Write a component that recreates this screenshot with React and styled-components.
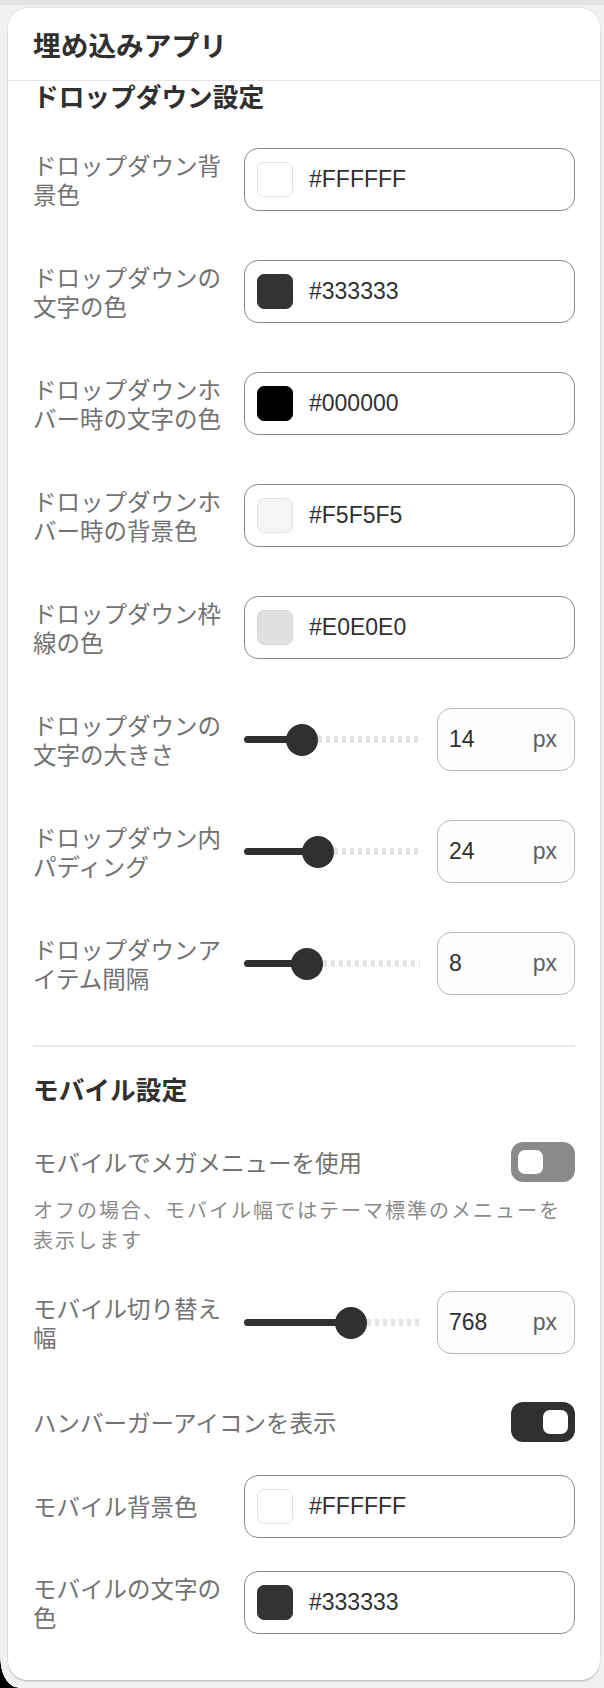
import React from "react";
import styled, { createGlobalStyle } from "styled-components";

const GlobalStyle = createGlobalStyle`
  html, body { margin: 0; padding: 0; }
  body {
    background: linear-gradient(#e4e4e4 0 5px, #f1f1f1 5px);
    font-family: "Liberation Sans", "Noto Sans CJK JP", sans-serif;
    color: #303030;
  }
  * { box-sizing: border-box; }
`;

const Page = styled.div`
  padding: 8px 4px 8px 8px;
`;

const Card = styled.section`
  background: #ffffff;
  border-radius: 20px;
  box-shadow: 0 0 0 1px rgba(0, 0, 0, 0.05), 0 2px 1px rgba(0, 0, 0, 0.12);
  overflow: hidden;
`;

const CardHeader = styled.header`
  height: 73px;
  display: flex;
  align-items: center;
  padding: 0 25px;
  border-bottom: 1px solid #e6e6e6;
`;

const Title = styled.h1`
  margin: 0;
  font-family: "Noto Sans CJK JP", sans-serif;
  font-size: 27.7px;
  font-weight: 700;
  line-height: 34px;
  color: #303030;
`;

const Body = styled.div`
  padding: 0 25px 46px;
  display: flex;
  flex-direction: column;
`;

const SectionTitle = styled.h2`
  margin: ${(p) => p.$mt || 0}px 0 0;
  font-family: "Noto Sans CJK JP", sans-serif;
  font-size: 25.7px;
  font-weight: 700;
  line-height: 30px;
  color: #303030;
`;

const FieldList = styled.div`
  margin-top: ${(p) => p.$mt || 0}px;
  display: flex;
  flex-direction: column;
  gap: 49px;
`;

const FieldRow = styled.div`
  margin-top: ${(p) => p.$mt || 0}px;
  display: grid;
  grid-template-columns: 197px 1fr;
  column-gap: 14px;
  align-items: center;
`;

const Label = styled.label`
  font-family: "Noto Sans CJK JP", sans-serif;
  font-size: 23.5px;
  line-height: 29px;
  color: #727272;
`;

const ColorInput = styled.div`
  height: 63px;
  border: 1px solid #8a8a8a;
  border-radius: 14px;
  background: #ffffff;
  display: flex;
  align-items: center;
  gap: 16px;
  padding: 0 12px;
`;

const Swatch = styled.span`
  width: 36px;
  height: 35px;
  border-radius: 7px;
  background: ${(p) => p.$color};
  border: 1px solid ${(p) => p.$border || p.$color};
  flex: none;
`;

const HexText = styled.span`
  font-family: "Liberation Sans", sans-serif;
  font-size: 23px;
  color: #303030;
`;

const SliderControl = styled.div`
  display: flex;
  align-items: center;
  gap: 17px;
`;

const Track = styled.div`
  position: relative;
  flex: 1;
  height: 32px;
`;

const TrackFill = styled.div`
  position: absolute;
  left: 0;
  top: 50%;
  height: 7px;
  margin-top: -3.5px;
  border-radius: 4px;
  background: #303030;
`;

const TrackRest = styled.div`
  position: absolute;
  right: 0;
  top: 50%;
  height: 7px;
  margin-top: -3.5px;
  background: repeating-linear-gradient(
    90deg,
    #e3e3e3 0 4px,
    transparent 4px 8px
  );
`;

const Thumb = styled.div`
  position: absolute;
  top: 0;
  width: 32px;
  height: 32px;
  margin-left: -16px;
  border-radius: 50%;
  background: #303030;
`;

const NumberBox = styled.div`
  width: 138px;
  height: 63px;
  flex: none;
  border: 1px solid #b8b8b8;
  border-radius: 14px;
  background: #fefefe;
  display: flex;
  align-items: center;
  justify-content: space-between;
  padding: 0 17px 0 11px;
  font-family: "Liberation Sans", sans-serif;
  font-size: 23px;
`;

const NumberValue = styled.span`
  color: #303030;
`;

const Unit = styled.span`
  color: #616161;
`;

const Divider = styled.hr`
  margin: 50px 0 0;
  border: none;
  height: 2px;
  background: #ebebeb;
`;

const ToggleRow = styled.div`
  margin-top: ${(p) => p.$mt || 0}px;
  display: flex;
  align-items: center;
  justify-content: space-between;
`;

const Toggle = styled.span`
  width: 64px;
  height: 40px;
  border-radius: 12px;
  background: ${(p) => (p.$on ? "#303030" : "#8a8a8a")};
  display: flex;
  align-items: center;
  justify-content: ${(p) => (p.$on ? "flex-end" : "flex-start")};
  padding: 0 7px;
  flex: none;
`;

const Knob = styled.span`
  width: 25px;
  height: 24px;
  border-radius: 7px;
  background: #ffffff;
`;

const HelpText = styled.p`
  margin: ${(p) => p.$mt || 0}px 0 0;
  font-family: "Noto Sans CJK JP", sans-serif;
  font-size: 20px;
  letter-spacing: 2px;
  line-height: 30px;
  color: #8a8a8a;
`;

const Corner = styled.div`
  position: fixed;
  left: 0;
  bottom: 0;
  width: 18px;
  height: 30px;
  background: radial-gradient(
    ellipse 18px 30px at 100% 0,
    transparent 97%,
    #000 100%
  );
  pointer-events: none;
`;

const dropdownColors = [
  { label: "ドロップダウン背景色", value: "#FFFFFF", color: "#ffffff", border: "#e3e3e3" },
  { label: "ドロップダウンの文字の色", value: "#333333", color: "#333333" },
  { label: "ドロップダウンホバー時の文字の色", value: "#000000", color: "#000000" },
  { label: "ドロップダウンホバー時の背景色", value: "#F5F5F5", color: "#f5f5f5", border: "#e3e3e3" },
  { label: "ドロップダウン枠線の色", value: "#E0E0E0", color: "#e0e0e0", border: "#d6d6d6" },
];

const dropdownSliders = [
  { label: "ドロップダウンの文字の大きさ", value: "14", pos: 0.292 },
  { label: "ドロップダウン内パディング", value: "24", pos: 0.403 },
  { label: "ドロップダウンアイテム間隔", value: "8", pos: 0.326 },
];

function ColorField({ label, value, color, border, mt }) {
  return (
    <FieldRow $mt={mt}>
      <Label>{label}</Label>
      <ColorInput>
        <Swatch $color={color} $border={border} />
        <HexText>{value}</HexText>
      </ColorInput>
    </FieldRow>
  );
}

function SliderField({ label, value, pos, mt }) {
  const center = `calc(16px + (100% - 32px) * ${pos})`;
  return (
    <FieldRow $mt={mt}>
      <Label>{label}</Label>
      <SliderControl>
        <Track>
          <TrackFill style={{ width: center }} />
          <TrackRest style={{ left: center }} />
          <Thumb style={{ left: center }} />
        </Track>
        <NumberBox>
          <NumberValue>{value}</NumberValue>
          <Unit>px</Unit>
        </NumberBox>
      </SliderControl>
    </FieldRow>
  );
}

export default function App() {
  return (
    <>
      <GlobalStyle />
      <Page>
        <Card>
          <CardHeader>
            <Title>埋め込みアプリ</Title>
          </CardHeader>
          <Body>
            <SectionTitle>ドロップダウン設定</SectionTitle>
            <FieldList $mt={37}>
              {dropdownColors.map((c) => (
                <ColorField key={c.label} {...c} />
              ))}
              {dropdownSliders.map((s) => (
                <SliderField key={s.label} {...s} />
              ))}
            </FieldList>

            <Divider />

            <SectionTitle $mt={27}>モバイル設定</SectionTitle>
            <ToggleRow $mt={38}>
              <Label>モバイルでメガメニューを使用</Label>
              <Toggle $on={false}>
                <Knob />
              </Toggle>
            </ToggleRow>
            <HelpText $mt={13}>
              オフの場合、モバイル幅ではテーマ標準のメニューを表示します
            </HelpText>
            <SliderField label="モバイル切り替え幅" value="768" pos={0.635} mt={36} />
            <ToggleRow $mt={48}>
              <Label>ハンバーガーアイコンを表示</Label>
              <Toggle $on>
                <Knob />
              </Toggle>
            </ToggleRow>
            <ColorField label="モバイル背景色" value="#FFFFFF" color="#ffffff" border="#e3e3e3" mt={33} />
            <ColorField label="モバイルの文字の色" value="#333333" color="#333333" mt={33} />
          </Body>
        </Card>
      </Page>
      <Corner />
    </>
  );
}
